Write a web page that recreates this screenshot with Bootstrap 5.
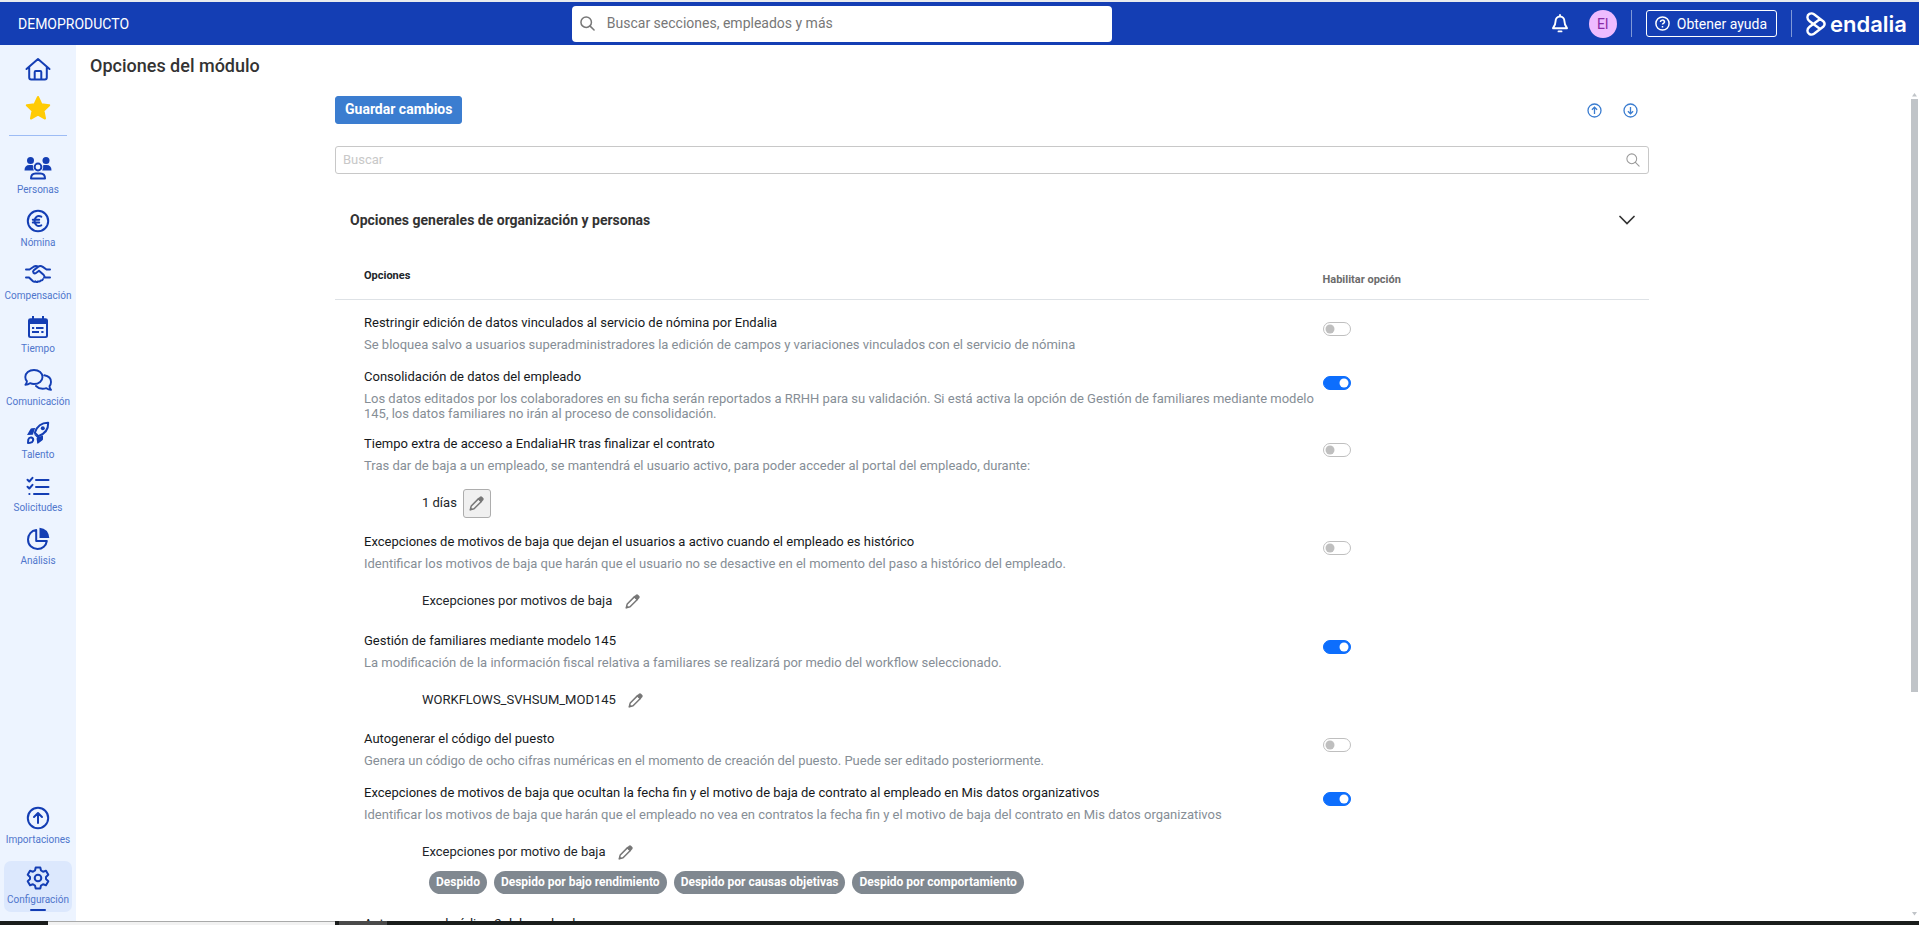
<!DOCTYPE html>
<html lang="es">
<head>
<meta charset="utf-8">
<meta name="viewport" content="width=device-width, initial-scale=1">
<title>Opciones del módulo</title>
<link href="https://cdn.jsdelivr.net/npm/bootstrap@5.3.0/dist/css/bootstrap.min.css" rel="stylesheet">
<script src="https://cdn.jsdelivr.net/npm/bootstrap@5.3.0/dist/js/bootstrap.bundle.min.js"></script>
<style>
  :root { --brand: #143eb4; --accent: #3b7dd0; }
  body { font-family: Roboto, "Liberation Sans", sans-serif; font-size: 13px; line-height: 20px; color: #212529; }
  svg { display: block; flex: none; }

  .topbar { background: var(--brand); border-top: 2px solid #e9ebee; height: 45px; color: #fff; font-size: 14px; padding: 0 12px 0 18px; }
  .tenant { width: 29%; margin-right: 6px; }
  .topbar-tools { gap: 14px; }
  .btn-bell { margin-right: 7px; }
  .global-search { width: 540px; height: 36px; border-radius: 4px; padding: 0 8px; color: #777; }
  .global-search .form-control { font-size: 14px; color: #777; padding: 0; border: 0; box-shadow: none; background: none; }
  .global-search .form-control::placeholder { color: #777; opacity: 1; }
  .avatar { width: 28px; height: 28px; background: #eebbff; color: #8a2ba6; font-size: 14px; line-height: 28px; }
  .divider-v { width: 1px; height: 27px; background: #7f98d8; }
  .btn-help { --bs-btn-color: #fff; --bs-btn-border-color: #fff; --bs-btn-hover-color: #fff; --bs-btn-hover-border-color: #fff;
    height: 27px; padding: 0 9px 0 8px; font-size: 14px; line-height: 20px; gap: 7px; border-radius: 3px; }
  .brand { color: #fff; font: 600 22px/24px Inter, "Open Sans", sans-serif; }

  .sidebar { width: 76px; background: #edf4ff; color: var(--brand); padding: 10px 4px 9px; }
  .side-star { margin-top: 10px; }
  .side-link { color: #4f76cc; text-decoration: none; font-size: 10px; line-height: 14px; height: 53px; width: 68px; white-space: nowrap; gap: 3px; }
  .side-link svg { color: var(--brand); }
  .side-link.current { background: #dce8fd; border-radius: 7px; height: 51px; padding-top: 4px; margin-top: 2px; gap: 2px; }
  .side-link.current::after { content: ""; width: 16px; height: 2px; background: var(--brand); border-radius: 1px; }
  .side-rule { width: 58px; height: 1px; background: #9dbcf5; margin: 14px 0 20px; }

  .page-title { font-size: 18px; line-height: 24px; font-weight: 500; color: #333; padding: 9px 14px 12px; }
  .settings { max-width: 1314px; padding-top: 6px; }
  .btn-save { --bs-btn-bg: var(--accent); --bs-btn-border-color: var(--accent); --bs-btn-color: #fff; --bs-btn-hover-bg: #336fbb; --bs-btn-hover-color: #fff;
    font-size: 14px; font-weight: 700; line-height: 18px; height: 28px; padding: 0 9px 2px; border-radius: 3px; }
  .btn-round { color: var(--accent); width: 36px; height: 28px; }
  .move-tools { padding-right: 1px; }
  .filter-box { height: 28px; border: 1px solid #c8c8c8; border-radius: 3px; margin-top: 22px; padding: 0 8px 0 7px; color: #999; }
  .filter-box .form-control { font-size: 13px; padding: 0; border: 0; box-shadow: none; }
  .filter-box .form-control::placeholder { color: #c8c8c8; opacity: 1; }
  .section-head { margin-top: 36px; padding: 0 14px 0 15px; height: 20px; font-size: 14px; font-weight: 700; color: #333; }

  .options-table { margin: 0; }
  .options-table th { font-size: 11px; line-height: 16px; font-weight: 700; border-bottom: 1px solid #dee2e6; vertical-align: top; padding: 38px 0 15px 29px; }
  .options-table th + th { color: #6c6c6c; padding: 42px 0 9px 2px; }
  .options-table td { height: 54px; padding: 13px 0 0 29px; border: 0; vertical-align: top; }
  .options-table td + td { padding: 22px 0 0 2px; }
  .option-name { color: #16191c; }
  .option-text { color: #868e96; line-height: 15px; margin: 4px 0 0; }
  .option-value { margin: 16px 0 1px 58px; gap: 6px; color: #212529; }
  .btn-edit { width: 28px; height: 29px; border-radius: 3px; color: #777; }
  .btn-edit.chosen { background: #f0f0f0; border: 1px solid #adadad; }
  .tag-list { margin: 0 0 0 65px; gap: 7px; min-height: 1px; }
  .tag-list.filled { margin-top: 4px; margin-bottom: 7px; }
  .tag { background: #808890; border-radius: 12px; font-size: 12px; line-height: 15px; font-weight: 700; padding: 4px 7px; }

  .form-switch { min-height: 14px; padding: 0; margin: 0; font-size: 14px; line-height: 14px; }
  .form-switch .form-check-input { float: none; display: block; margin: 0; width: 28px; height: 14px; border-color: #bfbfbf;
    --bs-form-switch-bg: url("data:image/svg+xml,%3csvg xmlns='http://www.w3.org/2000/svg' viewBox='-4 -4 8 8'%3e%3ccircle r='3' fill='%23bfbfbf'/%3e%3c/svg%3e"); }
  .form-switch .form-check-input:checked { border-color: #0d6efd;
    --bs-form-switch-bg: url("data:image/svg+xml,%3csvg xmlns='http://www.w3.org/2000/svg' viewBox='-4 -4 8 8'%3e%3ccircle r='3' fill='%23fff'/%3e%3c/svg%3e"); }

  .scroll-rail { width: 11px; padding: 3px 1px 5px 3px; color: #c0c4c8; }
  .scroll-thumb { width: 7px; height: 72%; background: #c0c4c8; }
  .taskbar { height: 4px; background: #1a1d1c; padding-left: 48px; }
  .task-a { width: 287px; background: #f2f2f2; border-top: 1px solid #a9aaaa; }
  .task-b { width: 48px; background: #4a4a4a; margin-left: 4px; }
</style>
</head>
<body class="vh-100 d-flex flex-column overflow-hidden">

<svg width="0" height="0" class="position-absolute" aria-hidden="true">
  <symbol id="i-search" viewBox="0 0 16 16"><g fill="none" stroke="currentColor" stroke-linecap="round"><circle cx="6.6" cy="6.6" r="5.6"/><path d="M10.8 10.8 15 15"/></g></symbol>
  <symbol id="i-pencil" viewBox="0 0 16 16"><path fill="none" stroke="currentColor" stroke-width="1.6" stroke-linejoin="round" d="M1.400 14.600 2.400 10.600 10.200 2.800 13.200 5.800 5.400 13.600Z"/><path fill="currentColor" d="M9.200 3.200 11.600.8Q12.900-.2 14.200 1L15.200 2Q16.200 3.200 15.200 4.400L12.800 6.800ZM.6 15.400 1.600 12 4 14.400Z"/></symbol>
</svg>

<header class="topbar d-flex align-items-center flex-shrink-0">
  <div class="tenant">DEMOPRODUCTO</div>
  <form class="global-search bg-white d-flex align-items-center" role="search">
    <svg width="15" height="15" stroke-width="1.6"><use href="#i-search"/></svg>
    <input type="search" class="form-control ms-2 ps-1" placeholder="Buscar secciones, empleados y más" aria-label="Buscar secciones, empleados y más">
  </form>
  <div class="topbar-tools d-flex align-items-center ms-auto">
    <button type="button" class="btn btn-bell p-0 border-0 text-white" aria-label="Notificaciones">
      <svg width="16" height="19" viewBox="0 0 16 19" fill="none" stroke="currentColor" stroke-width="1.9" stroke-linecap="round" stroke-linejoin="round"><path d="M8 1v1.200M8 2.500c-2.800 0-4.400 2-4.400 4.600 0 3.600-1 5-2.600 7.100h14c-1.600-2.100-2.600-3.500-2.600-7.100 0-2.600-1.600-4.600-4.400-4.600Z"/><path d="M6.500 17.400h3"/></svg>
    </button>
    <span class="avatar rounded-circle text-center">EI</span>
    <span class="divider-v"></span>
    <button type="button" class="btn btn-help d-flex align-items-center">
      <svg width="15" height="15" viewBox="0 0 15 15" fill="none" stroke="currentColor" stroke-width="1.500"><circle cx="7.500" cy="7.500" r="6.600"/><path d="M5.500 6.100c0-2.600 4-2.600 4-.2 0 1.500-2 1.300-2 2.600M7.500 9.900v1.500"/></svg>
      Obtener ayuda
    </button>
    <span class="divider-v"></span>
    <a href="#" class="brand d-flex align-items-center text-decoration-none" aria-label="endalia">
      <svg class="me-1" width="20" height="24" viewBox="0 0 20 24" fill="none" stroke="currentColor" stroke-width="2.400" stroke-linejoin="round" stroke-linecap="round"><path d="M13.800 16.800 3.600 9.200C.6 7 .8 3.200 3.400 1.900 5 1.100 6.600 1.300 8 2.300L17.200 9.200Q20 12 17.200 14.800L8 21.700C6.600 22.700 5 22.900 3.400 22.100.8 20.800.6 17 3.600 14.800L13.800 7.200"/></svg>
      <span>endalia</span>
    </a>
  </div>
</header>

<div class="d-flex flex-grow-1 overflow-hidden">
  <nav class="sidebar d-flex flex-column align-items-center flex-shrink-0" aria-label="Secciones">
    <a href="#" aria-label="Inicio"><svg width="26" height="28" viewBox="0 0 26 28" fill="none" stroke="#143eb4" stroke-width="2" stroke-linecap="round" stroke-linejoin="round"><path d="M1.500 14 13 4 24.500 14M4.200 12v10.500q0 2 2 2h13.600q2 0 2-2V12M9.700 24.500v-7.500q0-1 1-1h4.600q1 0 1 1v7.500"/></svg></a>
    <a href="#" aria-label="Favoritos" class="side-star"><svg width="26" height="28" viewBox="0 0 26 28"><path fill="#ffcb05" stroke="#ffcb05" stroke-width="2" stroke-linejoin="round" d="M13 4 16.400 11.200 24.200 12.200 18.500 17.700 20 25.500 13 21.700 6 25.500 7.500 17.700 1.800 12.200 9.600 11.200Z"/></svg></a>
    <div class="side-rule"></div>

    <a href="#" class="side-link d-flex flex-column align-items-center">
      <svg width="28" height="24" viewBox="0 0 28 24" fill="currentColor"><circle cx="6.500" cy="4.500" r="3.500"/><circle cx="22" cy="4.500" r="3.500"/><path d="M.5 14.500q0-5.500 5-5.500h2.300q.8 0 1.200.3-.6 3 .9 5.200ZM27.500 14.500q0-5.500-5-5.500h-2q-.8 0-1.400.3.600 3-.9 5.200Z"/><g fill="none" stroke="currentColor" stroke-width="2" stroke-linejoin="round"><circle cx="14" cy="11" r="3.400"/><path d="M7 22.500q0-5 4.500-5h5q4.500 0 4.500 5Z"/></g></svg>Personas</a>
    <a href="#" class="side-link d-flex flex-column align-items-center">
      <svg width="24" height="24" viewBox="0 0 24 24" fill="none" stroke="currentColor" stroke-width="2"><circle cx="12" cy="12" r="10.200"/><path stroke-linecap="round" d="M15.300 7.700C11.500 5.800 8.600 8.300 8.600 12s2.900 6.200 6.700 4.300M6.800 10.700h6.400M6.800 13.600h6.400"/></svg>Nómina</a>
    <a href="#" class="side-link d-flex flex-column align-items-center">
      <svg width="26" height="24" viewBox="0 0 26 24" fill="none" stroke="currentColor" stroke-width="2" stroke-linecap="round" stroke-linejoin="round"><path d="M1 7.500h3.500L9 4.500q1.500-.8 3.200-.2M1 15.500h3l4 3.800q1.200 1 2.400.1 1.200 1.200 2.700 0 1.600.6 2.600-.9 1.700.2 2.200-1.300M25 7.500h-3.500L17.800 4.900q-2.600-1.600-4.800 0L8.800 8.300q-1.300 1.200-.3 2.500 1.100 1.200 2.500.2l3-2.200 4.800 4.300q1.200 1.200.3 2.500H25"/></svg>Compensación</a>
    <a href="#" class="side-link d-flex flex-column align-items-center">
      <svg width="24" height="24" viewBox="0 0 24 24" fill="currentColor"><path fill-rule="evenodd" d="M6 1h2v2.200h8V1h2v2.200h1.500Q22 3.200 22 5.500v15q0 2.500-2.500 2.500h-15Q2 23 2 20.500v-15Q2 3.200 4.500 3.200H6ZM4 9v11.500q0 .8.800.8h14.400q.8 0 .8-.8V9Z"/><path d="M6 12h2.200v2H6ZM10 12h7.500v2H10ZM6 16h7v2H6ZM15.300 16h2.200v2h-2.200Z"/></svg>Tiempo</a>
    <a href="#" class="side-link d-flex flex-column align-items-center">
      <svg width="28" height="24" viewBox="0 0 28 24" fill="none" stroke="currentColor" stroke-width="1.900" stroke-linejoin="round" stroke-linecap="round"><path d="M10 2c5 0 8.500 3.200 8.500 7s-3.500 7-8.500 7q-2 0-4-.8-2 1.500-4.600 1.600 1.500-1.700 1.500-3.600Q1.300 11.400 1.300 9C1.300 5.200 5 2 10 2ZM20.300 7.300c4 .6 6.700 3.300 6.700 6.700q0 2.400-1.500 4.200 0 1.900 1.500 3.600-2.600-.1-4.600-1.600-6.400 1.900-10.400-2.200"/></svg>Comunicación</a>
    <a href="#" class="side-link d-flex flex-column align-items-center">
      <svg width="24" height="24" viewBox="0 0 24 24"><path fill="none" stroke="currentColor" stroke-width="2" stroke-linejoin="round" d="M8.800 11.700C11 5.200 15.500 1.700 22.200 1.800 22.400 8.500 18.800 13 12.300 15.200ZM2 22l.3-3.500q.8-2.400 3.200-2 2.300.8 1.500 3.200-.6 1.800-3 2.100Z"/><circle cx="16.800" cy="7.200" r="2" fill="currentColor"/><path fill="currentColor" d="M9.200 7 6 7.200Q4.800 7.300 4.200 8.400L1 14l5.800-.3ZM17 14.800V18q-.1 1.200-1.200 1.800L11.500 23l-1-5.600 1.400-1Z"/><path fill="currentColor" d="M7.300 12.800 11.200 16.700 11 22 17 18V14.500L13 16Z"/></svg>Talento</a>
    <a href="#" class="side-link d-flex flex-column align-items-center">
      <svg width="24" height="24" viewBox="0 0 24 24" fill="none" stroke="currentColor" stroke-width="2" stroke-linecap="round" stroke-linejoin="round"><path d="M1.500 5.700 3.300 7.500 6.500 3.800M1.500 12.700 3.300 14.500 6.500 10.800M10 6h12.500M10 13h12.500M8 20h14.500M3.300 20h.2"/></svg>Solicitudes</a>
    <a href="#" class="side-link d-flex flex-column align-items-center">
      <svg width="24" height="24" viewBox="0 0 24 24"><path fill="currentColor" d="M13.500.7Q22.500 1.500 23.300 11H13.500Z"/><path fill="none" stroke="currentColor" stroke-width="2" stroke-linejoin="round" stroke-linecap="round" d="M10.200 3C5.500 3.500 2 7.500 2 12.500 2 18 6.200 22 11.500 22c5 0 8.700-3.500 9.300-8H10.200Z"/></svg>Análisis</a>

    <a href="#" class="side-link d-flex flex-column align-items-center mt-auto">
      <svg width="24" height="24" viewBox="0 0 24 24" fill="none" stroke="currentColor" stroke-width="2" stroke-linecap="round" stroke-linejoin="round"><circle cx="12" cy="12" r="10.200"/><path d="M12 17V7.200M8 11l4-4 4 4"/></svg>Importaciones</a>
    <a href="#" class="side-link current d-flex flex-column align-items-center" aria-current="page">
      <svg width="24" height="26" viewBox="0 0 24 26" fill="none" stroke="currentColor" stroke-width="2" stroke-linejoin="round"><path d="M9.700 2.500h4.600l.7 3 2 1.200 3-.9 2.300 4-2.300 2.100v2.200l2.300 2.100-2.300 4-3-.9-2 1.200-.7 3H9.700L9 20.500l-2-1.200-3 .9-2.300-4L4 14.100v-2.200L1.700 9.800 4 5.800l3 .9 2-1.200Z"/><circle cx="12" cy="13" r="3.300"/></svg>Configuración</a>
  </nav>

  <main class="d-flex flex-column flex-grow-1 overflow-hidden bg-white">
    <h1 class="page-title m-0">Opciones del módulo</h1>
    <div class="d-flex flex-grow-1 overflow-hidden">
      <div class="flex-grow-1 overflow-hidden">
        <div class="settings mx-auto">
          <div class="d-flex justify-content-between align-items-center">
            <button type="button" class="btn btn-save">Guardar cambios</button>
            <div class="move-tools d-flex">
              <button type="button" class="btn btn-round p-0 border-0 d-flex align-items-center justify-content-center" aria-label="Subir"><svg width="15" height="15" viewBox="0 0 15 15" fill="none" stroke="currentColor" stroke-width="1.300"><circle cx="7.500" cy="7.500" r="6.500"/><path d="M7.500 11V4.200M4.900 6.800l2.600-2.600 2.600 2.600"/></svg></button>
              <button type="button" class="btn btn-round p-0 border-0 d-flex align-items-center justify-content-center" aria-label="Bajar"><svg width="15" height="15" viewBox="0 0 15 15" fill="none" stroke="currentColor" stroke-width="1.300"><circle cx="7.500" cy="7.500" r="6.500"/><path d="M7.500 4v6.800M4.900 8.200l2.600 2.600 2.600-2.600"/></svg></button>
            </div>
          </div>
          <div class="filter-box d-flex align-items-center">
            <input type="text" class="form-control" placeholder="Buscar" aria-label="Buscar opciones">
            <svg width="14" height="14" stroke-width="1.200"><use href="#i-search"/></svg>
          </div>
          <div class="section-head d-flex justify-content-between align-items-center">
            <span>Opciones generales de organización y personas</span>
            <button type="button" class="btn p-0 border-0" aria-label="Contraer sección"><svg width="16" height="10" viewBox="0 0 16 10" fill="none" stroke="#333" stroke-width="1.700" stroke-linecap="round"><path d="M1 1.500 8 8.500 15 1.500"/></svg></button>
          </div>

          <table class="table options-table">
            <thead><tr><th scope="col" class="w-75">Opciones</th><th scope="col" class="w-25">Habilitar opción</th></tr></thead>
            <tbody>
              <tr>
                <td><label class="option-name d-block" for="op1">Restringir edición de datos vinculados al servicio de nómina por Endalia</label>
                  <p class="option-text">Se bloquea salvo a usuarios superadministradores la edición de campos y variaciones vinculados con el servicio de nómina</p></td>
                <td><div class="form-check form-switch"><input class="form-check-input" type="checkbox" role="switch" id="op1"></div></td>
              </tr>
              <tr>
                <td><label class="option-name d-block" for="op2">Consolidación de datos del empleado</label>
                  <p class="option-text">Los datos editados por los colaboradores en su ficha serán reportados a RRHH para su validación. Si está activa la opción de Gestión de familiares mediante modelo 145, los datos familiares no irán al proceso de consolidación.</p></td>
                <td><div class="form-check form-switch"><input class="form-check-input" type="checkbox" role="switch" id="op2" checked></div></td>
              </tr>
              <tr>
                <td><label class="option-name d-block" for="op3">Tiempo extra de acceso a EndaliaHR tras finalizar el contrato</label>
                  <p class="option-text">Tras dar de baja a un empleado, se mantendrá el usuario activo, para poder acceder al portal del empleado, durante:</p>
                  <div class="option-value d-flex align-items-center">1 días <button type="button" class="btn btn-edit chosen p-0 d-flex align-items-center justify-content-center" aria-label="Editar días"><svg width="15" height="15"><use href="#i-pencil"/></svg></button></div></td>
                <td><div class="form-check form-switch"><input class="form-check-input" type="checkbox" role="switch" id="op3"></div></td>
              </tr>
              <tr>
                <td><label class="option-name d-block" for="op4">Excepciones de motivos de baja que dejan el usuarios a activo cuando el empleado es histórico</label>
                  <p class="option-text">Identificar los motivos de baja que harán que el usuario no se desactive en el momento del paso a histórico del empleado.</p>
                  <div class="option-value d-flex align-items-center">Excepciones por motivos de baja <button type="button" class="btn btn-edit p-0 border-0 d-flex align-items-center justify-content-center" aria-label="Editar motivos"><svg width="15" height="15"><use href="#i-pencil"/></svg></button></div>
                  <div class="tag-list d-flex"></div></td>
                <td><div class="form-check form-switch"><input class="form-check-input" type="checkbox" role="switch" id="op4"></div></td>
              </tr>
              <tr>
                <td><label class="option-name d-block" for="op5">Gestión de familiares mediante modelo 145</label>
                  <p class="option-text">La modificación de la información fiscal relativa a familiares se realizará por medio del workflow seleccionado.</p>
                  <div class="option-value d-flex align-items-center">WORKFLOWS_SVHSUM_MOD145 <button type="button" class="btn btn-edit p-0 border-0 d-flex align-items-center justify-content-center" aria-label="Editar workflow"><svg width="15" height="15"><use href="#i-pencil"/></svg></button></div></td>
                <td><div class="form-check form-switch"><input class="form-check-input" type="checkbox" role="switch" id="op5" checked></div></td>
              </tr>
              <tr>
                <td><label class="option-name d-block" for="op6">Autogenerar el código del puesto</label>
                  <p class="option-text">Genera un código de ocho cifras numéricas en el momento de creación del puesto. Puede ser editado posteriormente.</p></td>
                <td><div class="form-check form-switch"><input class="form-check-input" type="checkbox" role="switch" id="op6"></div></td>
              </tr>
              <tr>
                <td><label class="option-name d-block" for="op7">Excepciones de motivos de baja que ocultan la fecha fin y el motivo de baja de contrato al empleado en Mis datos organizativos</label>
                  <p class="option-text">Identificar los motivos de baja que harán que el empleado no vea en contratos la fecha fin y el motivo de baja del contrato en Mis datos organizativos</p>
                  <div class="option-value d-flex align-items-center">Excepciones por motivo de baja <button type="button" class="btn btn-edit p-0 border-0 d-flex align-items-center justify-content-center" aria-label="Editar motivo"><svg width="15" height="15"><use href="#i-pencil"/></svg></button></div>
                  <div class="tag-list filled d-flex"><span class="badge tag">Despido</span><span class="badge tag">Despido por bajo rendimiento</span><span class="badge tag">Despido por causas objetivas</span><span class="badge tag">Despido por comportamiento</span></div></td>
                <td><div class="form-check form-switch"><input class="form-check-input" type="checkbox" role="switch" id="op7" checked></div></td>
              </tr>
              <tr>
                <td><label class="option-name d-block" for="op8">Autogenerar el código 2 del empleado</label></td>
                <td><div class="form-check form-switch"><input class="form-check-input" type="checkbox" role="switch" id="op8"></div></td>
              </tr>
            </tbody>
          </table>
        </div>
      </div>
      <div class="scroll-rail d-flex flex-column flex-shrink-0" aria-hidden="true">
        <svg width="7" height="6" viewBox="0 0 7 6"><path fill="currentColor" d="M1 3.500 3.500 0 6 3.500Z"/></svg>
        <div class="scroll-thumb"></div>
        <svg class="mt-auto" width="7" height="4" viewBox="0 0 7 4"><path fill="currentColor" d="M1 0h5L3.500 3.500Z"/></svg>
      </div>
    </div>
  </main>
</div>

<div class="taskbar d-flex flex-shrink-0" aria-hidden="true"><div class="task-a"></div><div class="task-b"></div></div>
</body>
</html>
